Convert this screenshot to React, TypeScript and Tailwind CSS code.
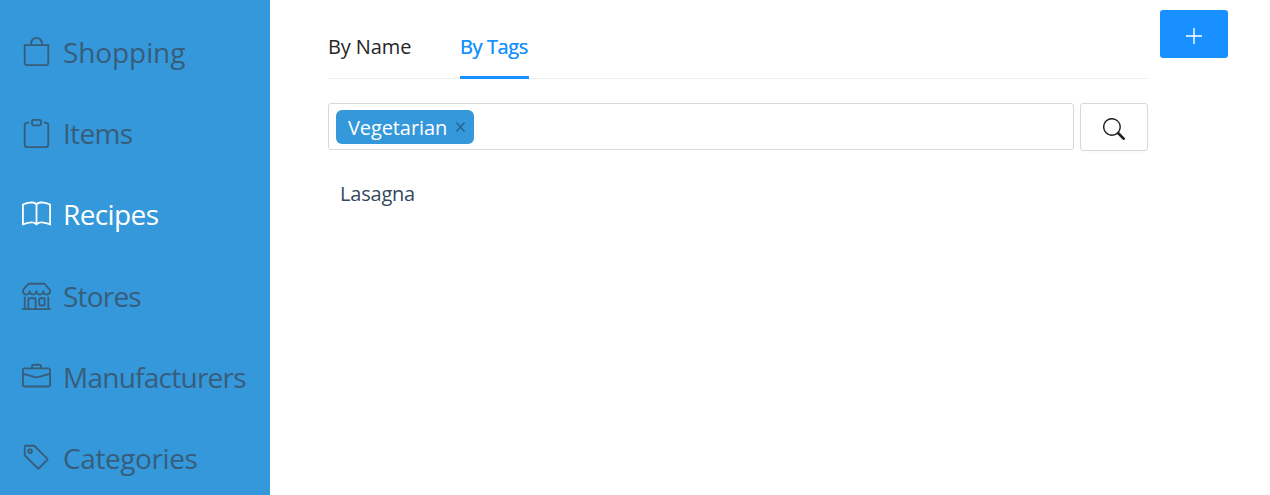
import React from "react";
import { BsBag, BsClipboard, BsBook, BsShop, BsBriefcase, BsTag, BsSearch } from "react-icons/bs";

const items = [
  { label: "Shopping", Icon: BsBag, tracking: "tracking-[-0.1px]" },
  { label: "Items", Icon: BsClipboard, tracking: "tracking-[-0.7px]" },
  { label: "Recipes", Icon: BsBook, active: true, tracking: "tracking-[-0.6px]" },
  { label: "Stores", Icon: BsShop, tracking: "tracking-[-0.8px]" },
  { label: "Manufacturers", Icon: BsBriefcase, tracking: "tracking-[-0.75px]" },
  { label: "Categories", Icon: BsTag, tracking: "tracking-[-0.4px]" },
];

export default function App() {
  return (
    <div className="flex h-[495px] w-[1270px] overflow-hidden bg-white font-['Open_Sans','Noto_Sans',sans-serif]">
      <nav className="flex w-[270px] shrink-0 flex-col bg-[#3498db] pt-[11.4px]">
        {items.map(({ label, Icon, active, tracking }) => (
          <a key={label} className={`flex h-[81.2px] shrink-0 items-center gap-3 pl-[22px] text-[28px] ${active ? "text-white" : "text-[#385d7b]"}`}>
            <Icon size={29} />
            <span className={tracking}>{label}</span>
          </a>
        ))}
      </nav>
      <main className="flex items-start gap-3 pl-[58px] text-[20px]">
        <div className="w-[820px]">
          <div className="flex h-[79px] gap-12 border-b border-[#f0f0f0] pt-[15px]">
            <button className="h-16 w-[84px] whitespace-nowrap text-left tracking-[-0.1px] text-[#262626]">By Name</button>
            <button className="h-16 w-[69px] whitespace-nowrap border-b-[3px] border-[#1890ff] pt-[3px] text-left tracking-[-0.4px] text-[#1890ff] [text-shadow:0_0_0.25px_currentColor]">By Tags</button>
          </div>
          <div className="mt-6 flex items-start gap-1.5">
            <div className="flex h-[47px] w-[746px] items-center rounded-[3px] border border-[#d9d9d9] pl-[7px]">
              <span className="flex h-[34px] w-[138px] items-center rounded-[6px] bg-[#3498db] pl-3 pt-px text-white">
                <span className="w-[108px] pt-px tracking-[-0.1px]">Vegetarian</span>
                <svg className="h-[10px] w-[10px]" viewBox="0 0 10 10" fill="none" stroke="#23648f" strokeWidth="1.4">
                  <path d="M.5 .5 8.5 9.5M8.5 .5 .5 9.5" />
                </svg>
              </span>
            </div>
            <button className="flex h-12 w-[68px] items-center justify-center rounded-[3px] border border-[#d9d9d9] pt-[3px] text-[#222] shadow-[0_2px_0_rgba(0,0,0,0.015)]">
              <BsSearch size={22} />
            </button>
          </div>
          <div className="mt-7 pl-3 tracking-[-0.2px] text-[#34495e]">Lasagna</div>
        </div>
        <button className="mt-[10px] flex h-12 w-[68px] items-center justify-center rounded-[3px] bg-[#1890ff] pt-[3px] text-white">
          <svg className="h-4 w-4" viewBox="0 0 16 16" fill="none" stroke="currentColor" strokeWidth="1.4">
            <path d="M0 8h16M8 0v16" />
          </svg>
        </button>
      </main>
    </div>
  );
}
